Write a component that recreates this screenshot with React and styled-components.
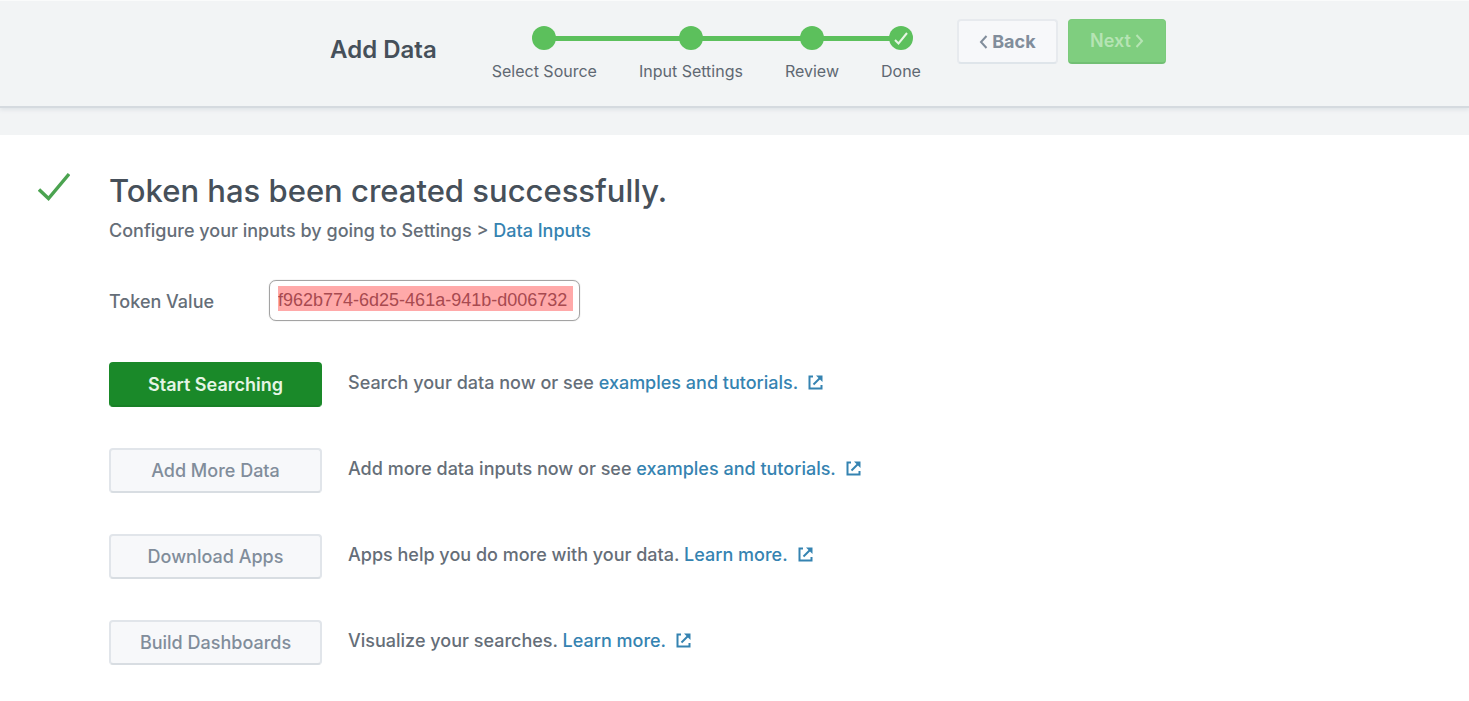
import React from "react";
import styled, { createGlobalStyle } from "styled-components";

const GlobalStyle = createGlobalStyle`
  *, *::before, *::after { box-sizing: border-box; }
  body {
    margin: 0;
    background: #fff;
    color: #656e78;
    font-family: Inter, "Open Sans", sans-serif;
    font-size: 18px;
    font-weight: 500;
    line-height: 24px;
  }
  h1, h2, p, ol, ul { margin: 0; padding: 0; }
  button, input { font: inherit; }
`;

const Header = styled.header`
  display: flex;
  justify-content: center;
  align-items: flex-start;
  min-height: 108px;
  padding: 18px 24px 0 51px;
  background: #f2f4f5;
  border-top: 1px solid #fafbfb;
  border-bottom: 2px solid #d5dadf;
  box-shadow: 0 2px 4px #dfe3e7;
  position: relative;
`;

const Title = styled.h1`
  padding-top: 16px;
  margin-right: 34px;
  color: #46505a;
  font-size: 24px;
  font-weight: 600;
  line-height: 30px;
  white-space: nowrap;
`;

const Steps = styled.ol`
  display: flex;
  list-style: none;
  padding-top: 7px;
`;

const Step = styled.li`
  color: #5f6872;
  font-size: 16px;
  font-weight: 400;
  line-height: 20px;
  white-space: nowrap;
`;

const Track = styled.div`
  display: flex;
  align-items: center;
  margin-bottom: 11px;
`;

const Line = styled.span`
  flex: 1;
  height: 5px;
  margin: 0 -1px;
  background: ${(p) => (p.$hidden ? "transparent" : "#5cc05c")};
`;

const Dot = styled.span`
  display: grid;
  place-items: center;
  width: 24px;
  height: 24px;
  border-radius: 50%;
  background: #5cc05c;
`;

const StepLabel = styled.div`
  padding: 0 21px;
`;

const Nav = styled.nav`
  display: flex;
  gap: 10px;
  margin-left: 15px;
`;

const NavButton = styled.button`
  display: flex;
  align-items: center;
  justify-content: center;
  gap: 4px;
  width: ${(p) => (p.$primary ? "98px" : "101px")};
  height: 45px;
  padding: 0;
  border: ${(p) => (p.$primary ? "1px solid #7ccb7c" : "2px solid #e7eaee")};
  border-bottom: 2px solid ${(p) => (p.$primary ? "#72bf74" : "#dfe5ea")};
  border-radius: 4px;
  background: ${(p) => (p.$primary ? "#7fce7f" : "#f7f8fa")};
  color: ${(p) => (p.$primary ? "#b6e4b4" : "#818d9b")};
  font-weight: ${(p) => (p.$primary ? 600 : 700)};
`;

const Band = styled.div`
  height: 27px;
  background: #f2f4f5;
`;

const Main = styled.main`
  display: grid;
  grid-template-columns: 32px minmax(0, 1fr);
  column-gap: 39px;
  padding: 36px 38px;
`;

const Heading = styled.h2`
  color: #46505a;
  font-size: 31px;
  font-weight: 500;
  line-height: 40px;
`;

const Hint = styled.p`
  margin-top: 8px;
`;

const Link = styled.a`
  color: #3583b1;
  text-decoration: none;
  svg { margin-left: 10px; vertical-align: -1px; }
`;

const Field = styled.div`
  display: flex;
  align-items: center;
  margin-top: 37px;
`;

const Label = styled.label`
  width: 160px;
  padding-top: 3px;
`;

const TokenInput = styled.input`
  width: 311px;
  height: 41px;
  padding: 0 6px 0 8px;
  border: 1px solid #a3a3a3;
  border-radius: 7px;
  background: linear-gradient(#ffa9a9, #ffa9a9) 8px 5px / calc(100% - 14px) 25px no-repeat;
  box-shadow: 0 0 1px #a3a3a3;
  color: #a84a50;
  font-family: "Liberation Sans", Arial, sans-serif;
  font-size: 18px;
  font-weight: 400;
`;

const Actions = styled.ul`
  display: grid;
  gap: 41px;
  margin-top: 41px;
  list-style: none;
`;

const Action = styled.li`
  display: flex;
  align-items: center;
  gap: 26px;
`;

const ActionButton = styled.button`
  flex: none;
  width: 213px;
  height: 45px;
  padding: 0;
  border: 2px solid ${(p) => (p.$primary ? "#1a8929" : "#e1e5ea")};
  border-bottom-color: ${(p) => (p.$primary ? "#188026" : "#d8dde2")};
  border-radius: 4px;
  background: ${(p) => (p.$primary ? "#1a8929" : "#f7f8fa")};
  color: ${(p) => (p.$primary ? "#e5f5e5" : "#818d9b")};
  font-weight: ${(p) => (p.$primary ? 600 : 500)};
`;

const Description = styled.p`
  padding-bottom: 3px;
`;

const steps = ["Select Source", "Input Settings", "Review", "Done"];

const actions = [
  { button: "Start Searching", text: "Search your data now or see", link: "examples and tutorials.", primary: true },
  { button: "Add More Data", text: "Add more data inputs now or see", link: "examples and tutorials." },
  { button: "Download Apps", text: "Apps help you do more with your data.", link: "Learn more." },
  { button: "Build Dashboards", text: "Visualize your searches.", link: "Learn more." },
];

const Chevron = ({ right }) => (
  <svg width="9" height="16" viewBox="0 0 9 16" fill="none" stroke="currentColor" strokeWidth="2" aria-hidden="true">
    <path d={right ? "M1.5 2 L7 8 L1.5 14" : "M7.5 2 L2 8 L7.5 14"} />
  </svg>
);

const ExternalIcon = () => (
  <svg width="15" height="15" viewBox="0 0 15 15" fill="none" stroke="currentColor" strokeWidth="2" aria-hidden="true">
    <path d="M5 1.5 H1.5 V13.5 H13.5 V10" />
    <path d="M5.5 9.5 L12 3" />
    <path d="M8 .5 H14.5 V7 Z" fill="currentColor" stroke="none" />
  </svg>
);

export default function App() {
  return (
    <>
      <GlobalStyle />
      <Header>
        <Title>Add Data</Title>
        <Steps>
          {steps.map((name, i) => (
            <Step key={name}>
              <Track>
                <Line $hidden={i === 0} />
                <Dot>
                  {i === steps.length - 1 && (
                    <svg width="14" height="13" viewBox="0 0 14 13" fill="none" stroke="#e6f6e4" strokeWidth="2" aria-hidden="true">
                      <path d="M1 8 L4.5 11.5 L13 1" />
                    </svg>
                  )}
                </Dot>
                <Line $hidden={i === steps.length - 1} />
              </Track>
              <StepLabel>{name}</StepLabel>
            </Step>
          ))}
        </Steps>
        <Nav>
          <NavButton type="button"><Chevron />Back</NavButton>
          <NavButton type="button" $primary>Next<Chevron right /></NavButton>
        </Nav>
      </Header>
      <Band />
      <Main>
        <svg width="32" height="32" viewBox="0 0 32 32" fill="none" stroke="#4ba350" strokeWidth="3.4" aria-hidden="true">
          <path d="M1 18.5 L10.5 27.5 L31 3" />
        </svg>
        <div>
          <Heading>Token has been created successfully.</Heading>
          <Hint>
            Configure your inputs by going to Settings &gt; <Link href="#inputs">Data Inputs</Link>
          </Hint>
          <Field>
            <Label htmlFor="token">Token Value</Label>
            <TokenInput id="token" readOnly value="f962b774-6d25-461a-941b-d006732" />
          </Field>
          <Actions>
            {actions.map((a) => (
              <Action key={a.button}>
                <ActionButton type="button" $primary={a.primary}>{a.button}</ActionButton>
                <Description>
                  {a.text} <Link href="#help">{a.link}<ExternalIcon /></Link>
                </Description>
              </Action>
            ))}
          </Actions>
        </div>
      </Main>
    </>
  );
}
